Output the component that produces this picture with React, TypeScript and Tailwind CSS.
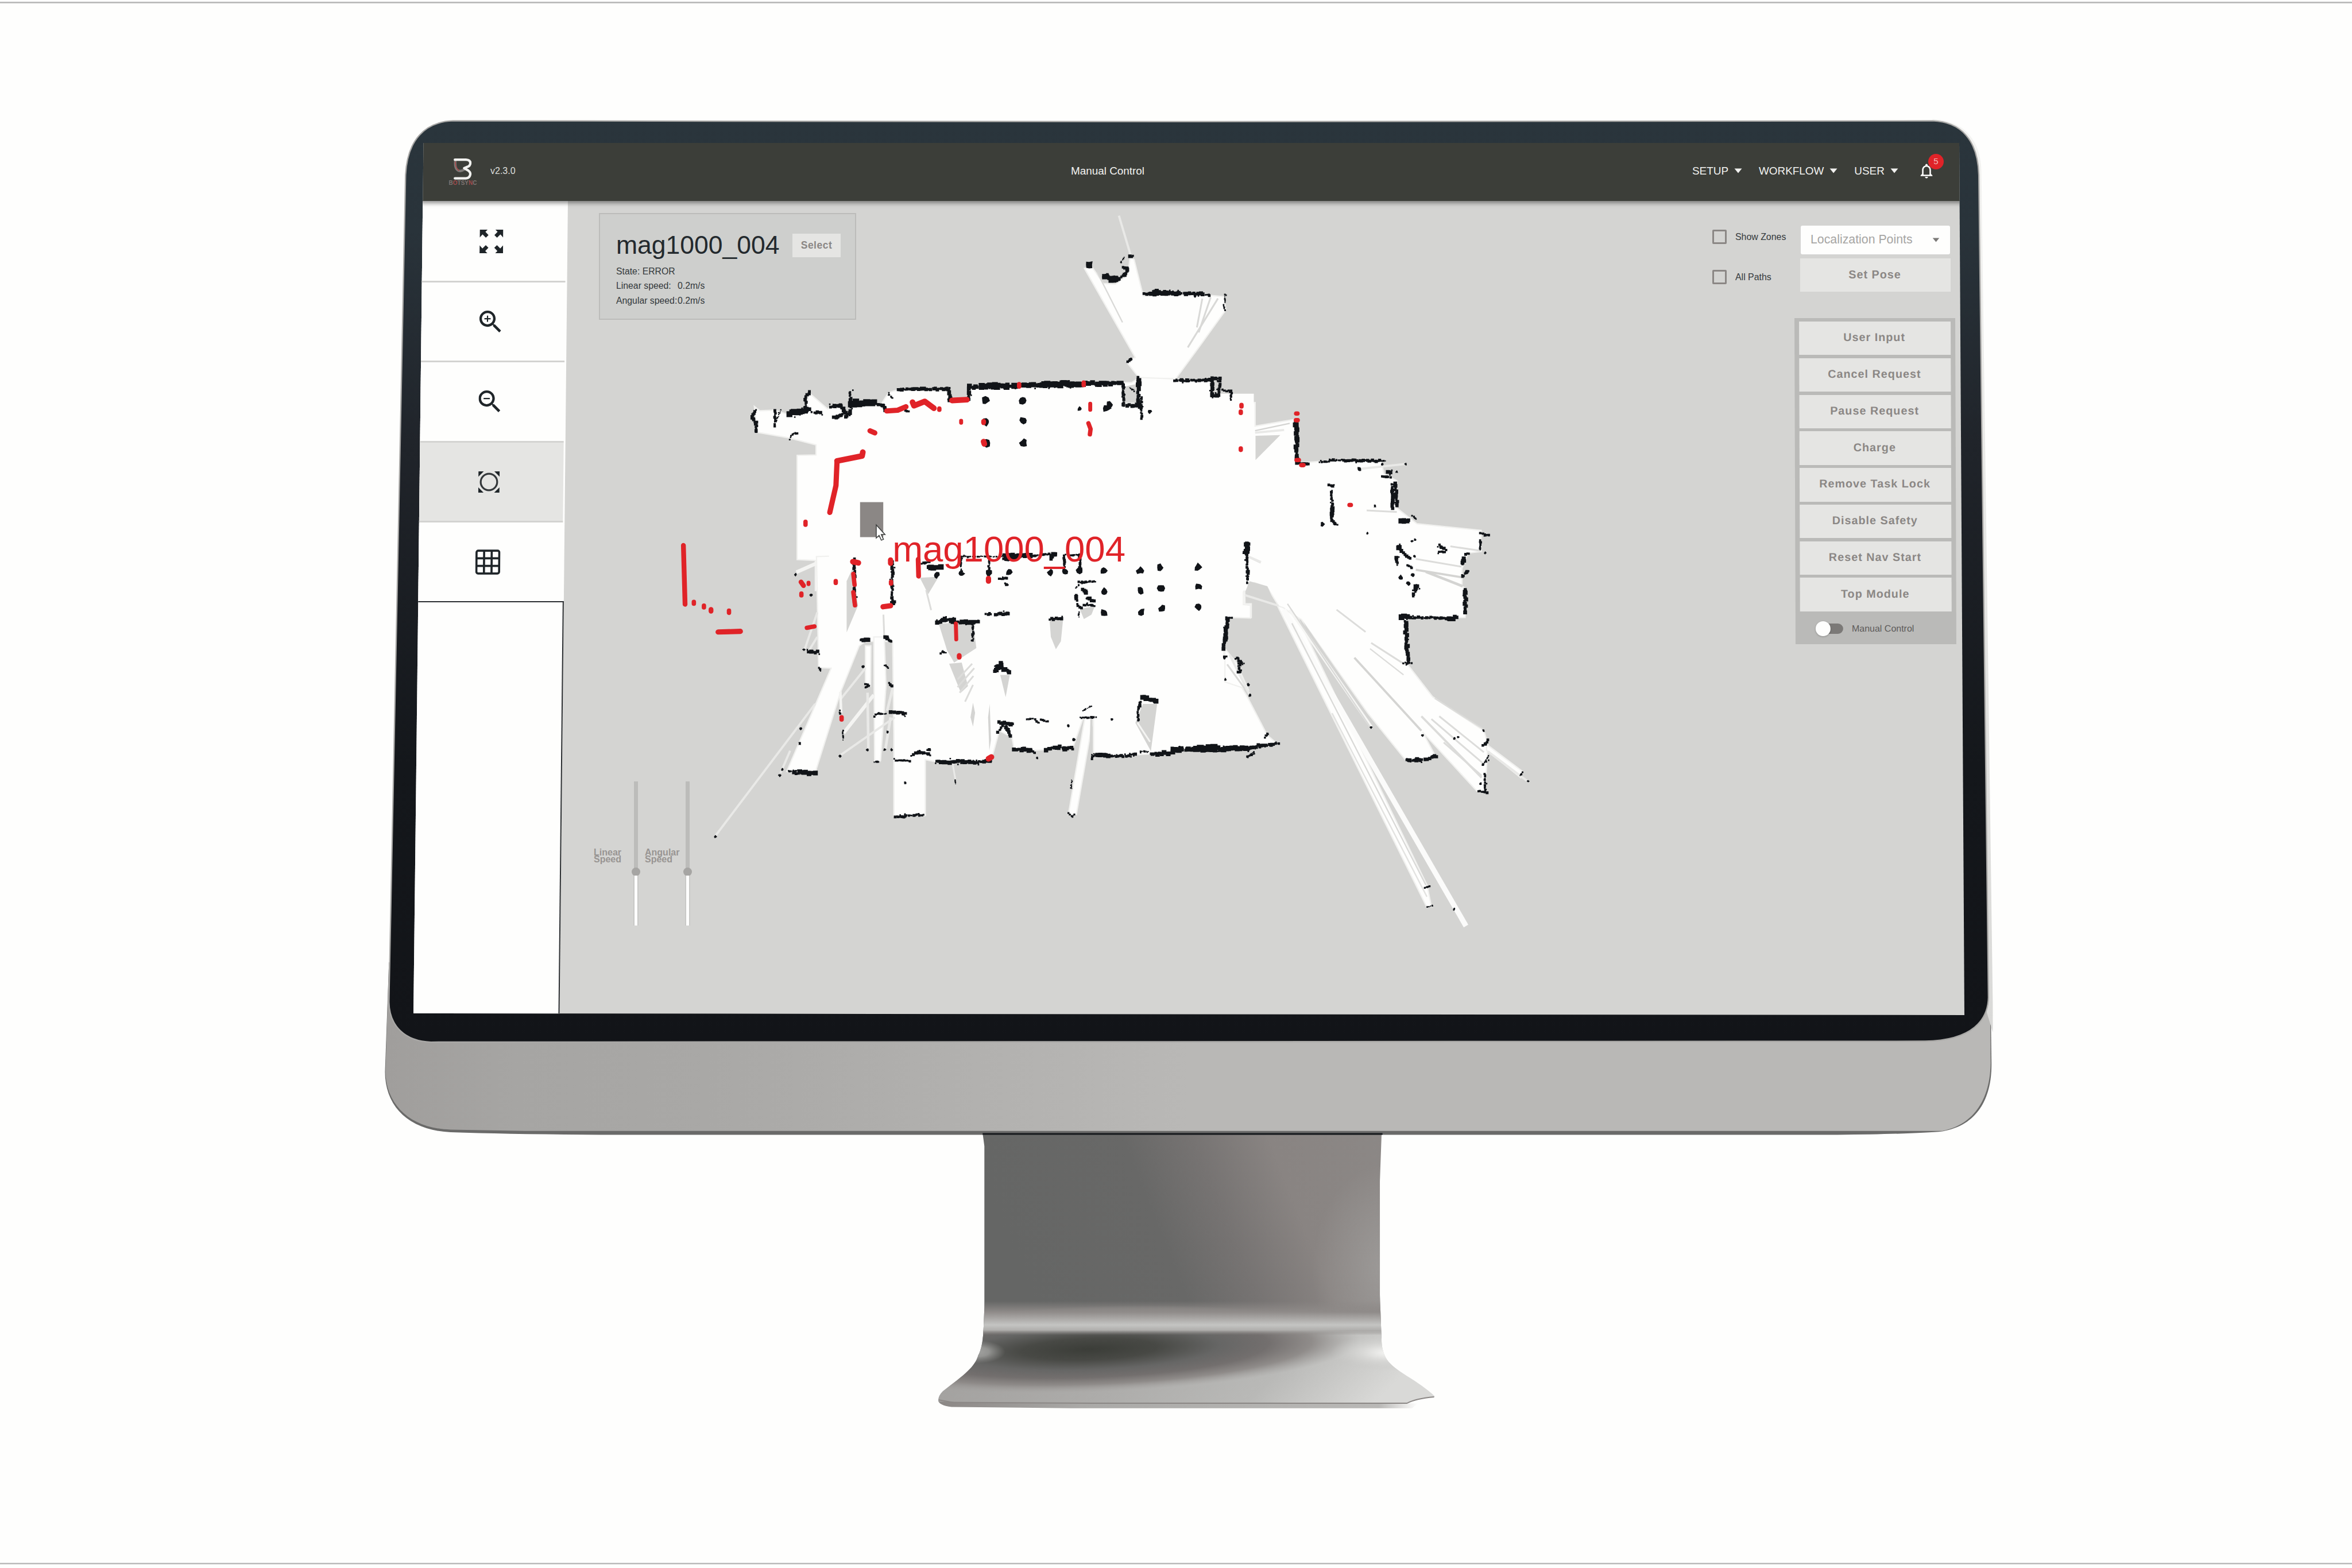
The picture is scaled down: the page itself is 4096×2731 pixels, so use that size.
import { ReactNode } from "react";

/* ---------- map geometry ---------- */

type Tile = { ox: number; oy: number; sx: number; sy: number };
type Stroke = [number, string];

const north: Tile = { ox: 1600, oy: 450, sx: 0.8291, sy: 0.574 };
const east: Tile = { ox: 2800, oy: 800, sx: 0.5102, sy: 0.8929 };
const south: Tile = { ox: 1500, oy: 1150, sx: 0.9566, sy: 0.5102 };

function pts(t: Tile, s: string): [number, number][] {
  return s
    .trim()
    .split(/\s+/)
    .map((p) => {
      const [x, y] = p.split(",").map(Number);
      return [t.ox + x * t.sx, t.oy + y * t.sy];
    });
}

const poly = (t: Tile, s: string) =>
  pts(t, s)
    .map(([x, y]) => `${x.toFixed(1)},${y.toFixed(1)}`)
    .join(" ");

let seed = 7;
function rnd() {
  seed = (seed * 16807) % 2147483647;
  return seed / 2147483647;
}

/* A wall is laid down as overlapping occupancy cells of uneven size. */
function wall(t: Tile, [w, s]: Stroke) {
  const p = pts(t, s);
  let d = "";
  const cell = (x: number, y: number, k: number) => {
    d += `M${(x - k / 2).toFixed(1)} ${(y - k / 2).toFixed(1)}h${k.toFixed(1)}v${k.toFixed(1)}h${(-k).toFixed(1)}z`;
  };
  for (let i = 0; i < p.length - 1; i++) {
    const [x1, y1] = p[i];
    const [x2, y2] = p[i + 1];
    const n = Math.max(1, Math.ceil(Math.hypot(x2 - x1, y2 - y1) / 4));
    for (let j = 0; j <= n; j++) {
      const f = j / n;
      const x = x1 + (x2 - x1) * f;
      const y = y1 + (y2 - y1) * f;
      const k = w * (0.55 + rnd() * 0.55);
      const o = w * 0.45;
      cell(x + (rnd() - 0.5) * o, y + (rnd() - 0.5) * o, k);
      if (rnd() > 0.82) cell(x + (rnd() - 0.5) * w * 1.5, y + (rnd() - 0.5) * w * 1.5, 3.5);
    }
  }
  return d;
}

function blob(t: Tile, s: string, r: number) {
  return pts(t, s)
    .map(([x, y]) => {
      const n = 8;
      let d = "";
      for (let i = 0; i < n; i++) {
        const a = (i / n) * Math.PI * 2;
        const q = r * (0.6 + rnd() * 0.65);
        d += `${i ? "L" : "M"}${(x + Math.cos(a) * q).toFixed(1)} ${(y + Math.sin(a) * q * 1.05).toFixed(1)}`;
      }
      return d + "z";
    })
    .join("");
}

const freeSpace: [Tile, string][] = [
  [north, "1060,285 1080,278 1112,345 1145,348 1180,310 1186,240 1197,250 1222,395 1390,390 1444,398 1450,450 1380,590 1312,724 1212,724 1175,655 1200,640"],
  [north, "150,835 165,852 205,850 250,870 290,850 302,782 352,845 372,822 410,865 415,825 500,825 520,780 548,768 685,765 685,812 740,812 742,760 1165,740 1190,740 1212,720 1405,730 1412,795 1463,800 1445,822 1530,822 1530,1568 318,1568 318,1448 268,1445 268,1030 320,1028 320,988 245,960 158,938"],
  [east, "0,135 135,135 135,195 310,178 325,290 430,285 700,283 712,318 770,335 770,405 860,445 1148,462 1148,516 1090,520 1062,560 1062,605 1080,612 1076,685 812,687 818,805 930,888 1160,975 1178,1010 1165,1132 1130,1130 885,978 945,1042 812,1052 640,930 342,690 240,655 190,608 105,590 88,600 90,650 118,650 118,685 0,685"],
  [south, "383,240 1412,180 1410,360 1403,400 1403,455 1420,458 1420,515 1365,512 1355,690 1410,860 1460,1040 1482,1076 1415,1098 1240,1104 1180,1124 1045,1140 1045,965 1020,965 995,1100 900,1108 855,1098 850,1050 820,1020 800,1155 665,1158 643,1150 643,1400 568,1405 568,1040 565,620 500,620 485,640 440,850 380,1208 312,1202 418,740 388,738"],
  [south, "1024,965 1044,965 1004,1395 985,1395"],
  [south, "520,600 545,600 549,820 536,1155 522,1160"],
  [south, "500,640 513,640 512,820 500,810"],
  [east, "262,660 330,690 905,1370 925,1425 903,1425 235,655"],
  [east, "1172,1010 1335,1080 1325,1095 1172,1025"],
  [east, "0,765 50,800 105,870 0,850"],
];

const unknown: [Tile, string][] = [
  [south, "470,290 482,460 455,580 455,350"],
  [south, "675,540 757,535 765,650 712,715 695,660"],
  [south, "630,335 675,330 650,408"],
  [south, "940,525 972,525 967,620 955,655 943,600"],
  [south, "822,770 845,770 835,870"],
  [south, "1163,900 1197,900 1182,1112 1145,985"],
  [south, "1012,475 1048,462 1040,500 1022,520"],
  [south, "757,895 762,940 757,1002 751,960"],
  [south, "797,900 800,1060 796,1110 793,960"],
  [south, "700,720 730,715 745,820 728,850"],
  [north, "1160,760 1206,745 1206,820 1172,820"],
  [east, "137,220 248,218 137,282"],
  [east, "110,592 190,605 225,650 92,618"],
  [east, "350,695 640,935 655,965 600,935 430,790"],
];

/* Thin laser rays, light over unknown space or faint over free space. */
const rays: [Tile, number, string, string][] = [
  [north, 5, "#e9e9e7", "1155,75 1190,245"],
  [north, 3, "#d9d9d7", "1095,300 1165,500"],
  [north, 4, "#d9d9d7", "1385,405 1370,520"],
  [north, 4, "#d9d9d7", "1408,400 1375,540"],
  [north, 4, "#d9d9d7", "1428,405 1345,600"],
  [east, 12, "#fbfbfa", "262,665 1080,1475"],
  [east, 3, "#d9d9d7", "300,700 900,1370"],
  [east, 3, "#e2e2e0", "480,930 905,1400"],
  [east, 7, "#f6f6f4", "290,665 655,965"],
  [east, 3, "#d9d9d7", "280,650 650,965"],
  [east, 5, "#e9e9e7", "135,212 265,205"],
  [east, 3, "#d4d4d2", "135,207 290,188"],
  [east, 5, "#e9e9e7", "90,628 240,655"],
  [east, 4, "#dcdcda", "500,665 630,722"],
  [east, 5, "#d4d4d2", "580,788 880,975"],
  [east, 4, "#dcdcda", "655,750 805,805"],
  [east, 3, "#dcdcda", "650,765 800,832"],
  [east, 5, "#dcdcda", "880,938 1150,1095"],
  [east, 4, "#dcdcda", "925,945 1155,1058"],
  [east, 4, "#dcdcda", "960,938 1160,1030"],
  [east, 4, "#dcdcda", "980,1005 1150,1090"],
  [east, 3, "#dcdcda", "940,892 1155,970"],
  [east, 4, "#dcdcda", "855,535 1060,555"],
  [east, 5, "#d4d4d2", "855,563 1060,582"],
  [east, 6, "#d4d4d2", "900,568 1065,605"],
  [east, 4, "#dcdcda", "635,411 770,415"],
  [east, 4, "#dcdcda", "1010,503 1145,514"],
  [east, 5, "#e9e9e7", "600,305 808,292"],
  [east, 5, "#e9e9e7", "1178,1028 1355,1104"],
  [east, 4, "#d9d9d7", "10,805 105,880"],
  [east, 4, "#e2e2e0", "105,530 160,545"],
  [south, 5, "#e9e9e7", "380,900 142,1490"],
  [south, 5, "#e9e9e7", "320,1110 297,1210"],
  [south, 8, "#f4f4f2", "520,860 448,1030"],
  [south, 5, "#e9e9e7", "500,740 440,880"],
  [south, 5, "#e9e9e7", "570,960 440,1130"],
  [south, 6, "#f4f4f2", "440,845 442,940"],
  [south, 6, "#e9e9e7", "505,850 507,1100"],
  [south, 6, "#e9e9e7", "560,960 548,1100"],
  [south, 6, "#e9e9e7", "565,830 552,930"],
  [south, 4, "#e9e9e7", "708,1165 715,1240"],
  [south, 8, "#f4f4f2", "335,310 383,270"],
  [south, 5, "#e9e9e7", "385,490 355,655"],
  [south, 5, "#e9e9e7", "385,600 362,670"],
  [south, 4, "#dcdcda", "755,720 720,790"],
  [south, 4, "#dcdcda", "760,740 720,825"],
  [south, 4, "#dcdcda", "758,775 725,850"],
  [south, 4, "#dcdcda", "757,815 738,890"],
  [south, 4, "#dcdcda", "645,390 657,480"],
  [south, 4, "#dcdcda", "543,500 545,600"],
  [south, 5, "#d4d4d2", "1040,965 1038,1120"],
  [south, 4, "#f4f4f2", "1150,985 1180,1070"],
  [south, 5, "#e9e9e7", "1415,240 1445,265"],
  [south, 5, "#e9e9e7", "1370,680 1418,860"],
];

const northWalls: Stroke[] = [
  [7, "153,850 143,880 155,900 155,935"], [6, "207,850 207,912"], [4, "222,850 215,880"], [13, "250,862 300,848"], [7, "302,778 290,800 292,840"],
  [8, "310,858 332,858"], [8, "360,835 388,830 402,860 370,880"], [8, "415,775 415,860 400,875"], [15, "418,822 482,822"], [8, "482,825 505,828 512,850"],
  [8, "548,767 688,764"], [9, "685,770 690,810"], [9, "740,762 742,805"], [13, "742,758 870,752"], [11, "870,752 1165,741"], [13, "950,748 1058,744"],
  [7, "1165,745 1170,830"], [10, "1165,830 1212,832"], [10, "1208,722 1210,830"], [6, "1217,800 1217,885"], [8, "1308,731 1405,730"],
  [9, "1412,724 1412,790 1430,790"], [7, "1412,724 1433,724 1430,790"], [6, "1440,770 1465,775 1463,810"], [9, "1225,386 1385,385"], [9, "1250,376 1320,386"],
  [6, "1395,390 1405,392"], [4, "1447,390 1447,420"], [4, "1443,435 1447,450"], [14, "1118,322 1145,332"], [6, "1112,318 1125,308"], [8, "1145,335 1172,312 1180,285 1165,280"], [4, "1160,262 1170,240"],
  [8, "1186,240 1192,234"], [5, "248,965 255,945 268,943"], [6, "1180,655 1188,645"], [4, "520,785 530,800"],
  [4, "1185,760 1195,770"], [6, "565,850 575,856"],
];

const eastWalls: Stroke[] = [
  [10, "318,185 325,290"], [8, "325,290 370,293"], [6, "425,288 465,287"], [7, "470,282 690,284"], [4, "690,284 718,285"], [6, "705,323 740,325"], [8, "730,314 742,314"],
  [8, "750,345 752,405"], [9, "765,340 770,400"], [7, "468,347 484,347"], [6, "478,360 480,400"], [10, "480,400 480,430"], [7, "480,438 502,448"],
  [11, "790,438 820,436"], [5, "840,425 856,432"], [6, "1145,468 1180,475"], [5, "1145,488 1145,512"], [7, "960,500 990,512"], [5, "960,517 985,517"],
  [9, "1066,548 1072,535"], [6, "1075,525 1092,522"], [6, "1060,578 1068,580"], [7, "1075,572 1090,568"], [9, "1075,615 1080,670"], [7, "815,684 1000,687"],
  [10, "1000,690 1035,684"], [12, "795,684 820,684"], [9, "808,695 820,800"], [6, "800,801 835,803"], [10, "780,505 790,512"], [7, "790,515 828,534"],
  [9, "770,533 770,545"], [8, "820,553 838,557"], [8, "850,605 862,605 842,632"], [10, "92,497 104,497"], [12, "96,515 98,520"], [6, "98,520 100,560"],
  [7, "103,565 103,588"], [9, "10,690 5,740"], [5, "5,685 32,687"], [5, "48,790 60,790"], [6, "62,803 85,802"], [6, "60,825 70,822"], [9, "0,1021 110,1020"],
  [6, "110,1022 180,1014 240,1008"], [5, "100,1041 132,1035"], [5, "182,988 195,984"], [9, "815,1052 900,1048"], [8, "900,1048 945,1040"], [7, "1158,1012 1180,1000"],
  [5, "1155,1063 1182,1040"], [5, "1165,1085 1165,1130"], [6, "1135,1130 1172,1133"], [4, "895,1377 918,1373"], [4, "907,1427 928,1423"],
  [4, "1322,1090 1332,1082"], [5, "5,785 0,785"],
];

const southWalls: Stroke[] = [
  [7, "473,250 475,460"], [7, "565,260 563,450"], [7, "568,440 566,450"], [6, "635,272 652,265"], [12, "650,291 680,290"], [4, "730,240 830,240"], [11, "830,238 893,236"],
  [6, "830,250 860,252"], [6, "893,236 935,230"], [10, "940,230 955,230"], [8, "943,250 948,235"], [6, "975,235 975,300"], [5, "975,233 1012,232"],
  [7, "1012,235 1012,300"], [5, "795,240 795,320"], [5, "728,240 728,310"], [6, "818,340 838,335"], [6, "835,362 840,368"], [6, "1010,355 1045,352"], [4, "1003,380 1010,365"],
  [9, "1020,390 1028,400"], [8, "1003,410 1005,435"], [7, "1005,455 1015,470"], [8, "1030,425 1045,440"], [6, "1022,455 1048,460"], [4, "1010,490 1010,510"],
  [8, "788,497 800,497"], [8, "812,497 842,496"], [9, "672,537 690,522 710,525"], [10, "705,535 770,535"], [6, "757,545 757,615"], [7, "940,520 968,518"],
  [5, "680,675 684,665 692,672"], [11, "810,750 825,722"], [10, "825,740 845,758"], [9, "488,612 508,610"], [9, "548,600 563,618"], [9, "365,668 385,668"],
  [5, "388,740 393,752"], [11, "1412,180 1410,230"], [5, "1412,240 1413,360"], [9, "1366,515 1363,560"], [7, "1362,560 1358,620"], [9, "1358,620 1356,650"],
  [7, "1357,688 1358,692"], [6, "1388,695 1398,715 1392,730 1396,755"], [12, "1163,870 1195,885"], [7, "1158,890 1152,930"], [5, "1150,935 1152,975"],
  [6, "1015,962 1050,962"], [4, "1020,930 1040,910"], [5, "885,968 905,968 912,985"], [5, "920,970 935,980"], [9, "820,985 850,990"], [7, "832,990 815,1030"], [8, "835,1000 848,1045"],
  [10, "855,1102 895,1106"], [6, "895,1110 905,1118"], [9, "930,1108 958,1092"], [11, "958,1094 995,1100"], [6, "1040,1145 1050,1125"], [11, "1055,1132 1080,1132"],
  [7, "1080,1136 1125,1133 1145,1124"], [4, "1158,1114 1175,1114"], [10, "1182,1124 1235,1120"], [12, "1235,1104 1415,1099"], [15, "1290,1100 1345,1102"],
  [7, "1420,1095 1440,1085 1480,1080"], [4, "1415,1135 1428,1115"], [4, "1455,1050 1462,1035"], [10, "668,1160 750,1158"], [8, "750,1164 800,1156"], [5, "572,1152 605,1155"],
  [7, "610,1132 625,1115 655,1128"], [6, "648,1105 655,1105"], [5, "315,1200 350,1200"], [10, "330,1210 380,1210"], [5, "522,955 528,945 550,945"], [8, "560,938 595,942"],
  [6, "590,945 595,955"], [6, "570,1406 595,1405"], [6, "595,1399 640,1397"], [4, "985,1390 995,1407 1000,1395"], [5, "522,1160 532,1160"], [4, "446,1020 446,1060"],
  [3, "993,1240 993,1280"], [3, "715,1240 715,1258"], [5, "438,930 440,945"], [6, "500,810 508,820 500,828"], [7, "556,808 563,820"], [4, "548,725 555,740"],
];

const blackCells =
  northWalls.map((w) => wall(north, w)).join("") +
  eastWalls.map((w) => wall(east, w)).join("") +
  southWalls.map((w) => wall(south, w)).join("") +
  blob(north, "1073,271 787,813 890,811 1130,828 790,897 892,890 790,980 893,980 1122,842", 9) +
  blob(north, "1046,845 1240,855 1365,395", 5) +
  blob(south, "1069,303 1157,303 1205,290 1294,288 1070,398 1158,392 1206,382 1296,373 1071,490 1159,488 1209,472 1297,466", 8.5) +
  blob(south, "728,316 795,316 842,310 943,310 977,306 670,323 837,250 1012,300", 8) +
  blob(south, "142,1495 301,1195 295,1220 439,1134 546,1105 505,1106 562,1106 595,1255 343,1078 345,1010 985,998 998,1060 1415,815 1418,862 1360,790 333,321 494,733 353,657 553,1025 1089,970 910,1142 370,412", 3.5) +
  blob(east, "602,305 437,446 788,582 822,598 843,577", 5) +
  blob(east, "655,966 1027,1432 1358,1104 1158,975 885,987 1027,995 1045,991 638,470 672,400 810,292 704,292 770,312 838,490 852,486 850,528 1165,520 105,857 112,885 1145,1110", 3.2);

const redStrokes: [Tile, number, string][] = [
  [north, 13, "378,1052 447,1032 449,1017"], [north, 12, "378,1052 375,1150 358,1257"], [north, 12, "515,853 545,850 568,836"],
  [north, 13, "586,818 590,832 620,815 645,842"], [north, 13, "695,811 736,808"], [north, 9, "1076,824 1076,848"], [north, 10, "1071,902 1077,925 1075,946"],
  [north, 12, "469,932 482,940"], [north, 10, "880,746 880,756"], [north, 10, "1058,740 1058,750"], [north, 10, "660,843 660,848"], [north, 9, "720,892 720,900"],
  [north, 11, "782,894 782,900"], [north, 13, "782,975 784,984"], [north, 10, "1493,829 1493,835"], [north, 10, "1491,855 1491,861"], [north, 10, "1491,1002 1491,1008"],
  [north, 10, "291,1294 291,1306"], [south, 11, "65,190 69,454"], [south, 10, "90,443 90,451"], [south, 10, "114,460 114,468"], [south, 11, "131,477 131,485"],
  [south, 10, "174,482 174,492"], [south, 12, "148,578 201,575"], [south, 13, "470,263 483,268"], [south, 12, "560,255 560,270"], [south, 11, "626,252 627,328"],
  [south, 10, "471,318 474,366"], [south, 10, "471,400 475,458"], [south, 12, "542,465 560,460"], [south, 10, "561,353 561,361"], [south, 11, "346,354 352,370"],
  [south, 9, "364,357 364,363"], [south, 10, "429,350 429,358"], [south, 10, "347,406 347,414"], [south, 10, "360,559 378,553"], [south, 9, "716,540 717,611"],
  [south, 11, "724,683 724,691"], [south, 10, "443,960 443,970"], [south, 13, "794,1146 801,1138"], [south, 12, "794,338 794,350"],
  [east, 10, "319,163 325,163"], [east, 10, "318,180 326,180"], [east, 10, "321,282 331,282"], [east, 10, "342,295 352,295"], [east, 10, "558,397 564,397"],
];

function SiteMap() {
  return (
    <svg className="absolute inset-0 h-[1418px] w-[2434px]" viewBox="1298.200 459.500 3194.600 1861.100" fill="none">
      {freeSpace.map(([t, s], i) => (
        <polygon key={i} points={poly(t, s)} fill="#fefefd" stroke="#f1f1ef" strokeWidth="3" />
      ))}
      {/* covers the outline where the tiles of free space meet */}
      <path d="M1895 1100H2840V1395H1895zM2780 900H2866V1350H2780zM2862 1060L2900 1060V1320H2850z" fill="#fefefd" />
      {unknown.map(([t, s], i) => (
        <polygon key={i} points={poly(t, s)} fill="#d4d4d2" />
      ))}
      {rays.map(([t, w, c, s], i) => (
        <polyline key={i} points={poly(t, s)} stroke={c} strokeWidth={w} />
      ))}
      <path d={blackCells} fill="#111418" />
      <rect x="1966" y="1148" width="53" height="80" fill="#8b8785" />
      {redStrokes.map(([t, w, s], i) => (
        <polyline key={i} points={poly(t, s)} stroke="#e02328" strokeWidth={w} strokeLinecap="round" strokeLinejoin="round" />
      ))}
      <text x="2040" y="1283.500" fontSize="83.300" fill="#e02328" fontFamily="'Liberation Sans', Arial, sans-serif">
        mag1000_004
      </text>
      <path d="M2003 1200v30l6.500-6 5 11 5-2-5-11h8.500z" fill="#fefefd" stroke="#3c3e3d" strokeWidth="2" />
    </svg>
  );
}

/* ---------- monitor ---------- */

function Monitor() {
  return (
    <svg className="absolute inset-0 h-[2731px] w-[4096px]" viewBox="0 0 5376 3584">
      <defs>
        <linearGradient id="bezel" x1="0" y1="0" x2="0" y2="1">
          <stop offset="0" stopColor="#2a353c" />
          <stop offset="0.12" stopColor="#29333a" />
          <stop offset="0.35" stopColor="#20242a" />
          <stop offset="0.7" stopColor="#14171b" />
          <stop offset="1" stopColor="#121418" />
        </linearGradient>
        <linearGradient id="chin" x1="0" y1="0" x2="1" y2="0">
          <stop offset="0" stopColor="#a09e9c" />
          <stop offset="0.08" stopColor="#a6a5a3" />
          <stop offset="0.2" stopColor="#a9a8a6" />
          <stop offset="0.5" stopColor="#b9b8b6" />
          <stop offset="1" stopColor="#b9b8b6" />
        </linearGradient>
        <linearGradient id="edge" x1="0" y1="0" x2="0" y2="1">
          <stop offset="0" stopColor="#f4f4f2" />
          <stop offset="1" stopColor="#d9d9d7" />
        </linearGradient>
        <linearGradient id="column" gradientUnits="userSpaceOnUse" x1="2330" y1="2900" x2="3180" y2="2560">
          <stop offset="0" stopColor="#656665" />
          <stop offset="0.36" stopColor="#686867" />
          <stop offset="0.52" stopColor="#767372" />
          <stop offset="0.7" stopColor="#898482" />
          <stop offset="1" stopColor="#8c8886" />
        </linearGradient>
        <radialGradient id="sheen">
          <stop offset="0" stopColor="#a3a19f" stopOpacity="0.75" />
          <stop offset="1" stopColor="#a3a19f" stopOpacity="0" />
        </radialGradient>
        <linearGradient id="bend" x1="0" y1="0" x2="0" y2="1">
          <stop offset="0" stopColor="#8b8785" stopOpacity="0" />
          <stop offset="0.32" stopColor="#8f8b89" />
          <stop offset="0.5" stopColor="#a8a6a4" />
          <stop offset="0.7" stopColor="#c4c4c2" />
          <stop offset="0.85" stopColor="#b0afad" />
          <stop offset="1" stopColor="#8b8785" stopOpacity="0" />
        </linearGradient>
        <linearGradient id="foot" x1="0" y1="0" x2="1" y2="0.15">
          <stop offset="0" stopColor="#a09e9c" />
          <stop offset="0.45" stopColor="#adacaa" />
          <stop offset="0.75" stopColor="#b9b9b7" />
          <stop offset="1" stopColor="#d9d9d7" />
        </linearGradient>
        <radialGradient id="shade">
          <stop offset="0" stopColor="#3b3d38" />
          <stop offset="0.25" stopColor="#484945" />
          <stop offset="0.48" stopColor="#666665" />
          <stop offset="0.66" stopColor="#736f6e" />
          <stop offset="0.82" stopColor="#8b8785" stopOpacity="0.9" />
          <stop offset="1" stopColor="#a3a19f" stopOpacity="0" />
        </radialGradient>
        <radialGradient id="glow">
          <stop offset="0" stopColor="#f4f4f2" />
          <stop offset="0.4" stopColor="#dadad8" />
          <stop offset="1" stopColor="#c6c6c4" stopOpacity="0" />
        </radialGradient>
        <linearGradient id="lip" x1="0" y1="0" x2="1" y2="0">
          <stop offset="0" stopColor="#8b8785" />
          <stop offset="0.3" stopColor="#aaa9a7" />
          <stop offset="0.92" stopColor="#b9b8b6" />
          <stop offset="1" stopColor="#fefefd" />
        </linearGradient>
        <clipPath id="stand">
          <path d="M2246 2590L2250 2620V2990L2248 3040Q2246 3080 2236 3098C2228 3125 2205 3142 2155 3180Q2143 3192 2145 3204L2480 3206H2950L3216 3207Q3235 3198 3280 3192C3240 3155 3200 3140 3178 3117Q3160 3100 3158 3068L3154 2960V2700L3158 2590z" />
        </clipPath>
      </defs>
      <path d="M0 5.500H5376M0 3574H5376" stroke="#bababa" strokeWidth="3.500" />

      <path d="M2145 3198Q2142 3212 2175 3216L2450 3219H3228L3240 3208z" fill="url(#lip)" />
      <g clipPath="url(#stand)">
        <rect x="2140" y="2590" width="1145" height="470" fill="url(#column)" />
        <ellipse cx="3170" cy="2900" rx="170" ry="240" fill="url(#sheen)" />
        <rect x="2140" y="3042" width="1145" height="168" fill="url(#foot)" />
        <ellipse cx="2490" cy="3084" rx="620" ry="98" fill="url(#shade)" transform="rotate(-2 2490 3084)" />
        <ellipse cx="3170" cy="3092" rx="130" ry="42" fill="url(#glow)" />
        <ellipse cx="2236" cy="3090" rx="62" ry="26" fill="url(#glow)" opacity="0.45" />
        <rect x="2140" y="2974" width="1145" height="78" fill="url(#bend)" />
      </g>
      <path d="M2146 3200L2180 3206 2500 3207.500H3216Q3235 3197 3278 3193" stroke="#8b8785" strokeWidth="2.500" fill="none" />

      <path d="M889 2200L880 2450C880 2530 935 2584 1030 2588Q1200 2594 1500 2594H4200Q4380 2592 4440 2586C4520 2572 4553 2510 4552 2430L4549 2200z" fill="#6a6a69" />
      <path d="M889 2200L881 2450C883 2528 940 2580 1030 2582L1200 2585H4440C4515 2570 4549 2508 4550 2430L4548 2200z" fill="url(#chin)" />
      <path d="M2246 2592H3160" stroke="#16191d" strokeWidth="4" />

      <path d="M4417 272C4490 275 4530 320 4529 400L4555 2300V2360L4540 2310z" fill="url(#edge)" />
      <path
        d="M1036 276L2700 278 4417 276C4482 278 4521 320 4523 400L4545 2280C4544 2330 4510 2378 4400 2380L985 2382C925 2380 890 2345 889 2290L927 400C931 320 971 278 1036 276Z"
        fill="url(#bezel)"
        stroke="#a9a8a6"
        strokeWidth="3"
      />
    </svg>
  );
}

/* ---------- application ---------- */

function Logo() {
  return (
    <div className="flex w-[48px] flex-col items-center">
      <svg className="h-[40px] w-[34px]" viewBox="0 0 44 52" fill="none" strokeLinejoin="round" strokeLinecap="round">
        <path d="M5 8Q3 30 16 31Q24 30 28 25" stroke="#7d7a78" strokeWidth="5.500" />
        <path d="M5 10Q5 24 13 30" stroke="#b8383b" strokeWidth="1.500" />
        <path d="M4 5.500H29Q39 6 39 13Q39 20 31 22L25 24.500L33 29Q39 33 39 38Q38 47 29 47.500H4" stroke="#f2f2f0" strokeWidth="5.500" />
      </svg>
      <span className="text-[10px] leading-[9px] font-bold text-[#7d7371]">
        B<span className="text-[#a04a4b]">O</span>TSY<span className="text-[#a04a4b]">N</span>C
      </span>
    </div>
  );
}

function Caret({ className }: { className: string }) {
  return (
    <svg className={className} viewBox="0 0 14 9">
      <path d="M0.500 0.500H13.500L7 8.500z" fill="currentColor" />
    </svg>
  );
}

function MenuItem({ label }: { label: string }) {
  return (
    <div className="flex items-center gap-[10px]">
      <span>{label}</span>
      <Caret className="h-[9px] w-[14px]" />
    </div>
  );
}

function Header() {
  return (
    <header className="relative z-10 flex h-[101px] items-center bg-[#3c3e39] pb-[3px] pl-[62px] text-[18.900px] text-[#f2f2f0] shadow-[0_4px_7px_rgba(60,60,58,0.55)]">
      <div className="flex w-[1018px] items-center gap-[24px]">
        <Logo />
        <span className="text-[16px] text-[#dededc]">v2.3.0</span>
      </div>
      <h1 className="w-[258px] text-center">Manual Control</h1>
      <nav className="ml-[889px] flex items-center gap-[29px]">
        <MenuItem label="SETUP" />
        <MenuItem label="WORKFLOW" />
        <MenuItem label="USER" />
      </nav>
      <div className="relative ml-[38px]">
        <svg className="h-[28px] w-[22px]" viewBox="3.500 2 17 20.500">
          <path
            d="M12 22c1.100 0 2-.9 2-2h-4c0 1.100.9 2 2 2zm6-6v-5c0-3.070-1.630-5.640-4.500-6.320V4c0-.83-.67-1.500-1.500-1.500s-1.500.67-1.500 1.500v.68C7.640 5.360 6 7.920 6 11v5l-2 2v1h16v-1l-2-2zm-2 1H8v-6c0-2.480 1.510-4.500 4-4.500s4 2.020 4 4.500v6z"
            fill="#fefefd"
          />
        </svg>
        <span className="absolute -top-[16px] left-[14px] flex h-[27px] w-[27px] items-center justify-center rounded-full bg-[#e02328] text-[15px] text-[#f0b9b8]">5</span>
      </div>
    </header>
  );
}

const toolIcons: { name: string; active?: boolean; size: string; icon: ReactNode }[] = [
  {
    name: "Fit",
    size: "size-[41px]",
    icon: (
      <svg viewBox="0 0 24 24" className="size-full" fill="#1f2529">
        <path d="M0 0h8L5.800 2.200 9 5.500 6.300 8.200 2.900 4.900 0 8zM24 0v8l-2.900-3.100-3.400 3.300L15 5.500l3.200-3.300L16 0zM0 24v-8l2.900 3.100 3.400-3.300L9 18.500l-3.200 3.300L8 24zM24 24h-8l2.200-2.200-3.200-3.300 2.700-2.700 3.400 3.300L24 16z" />
      </svg>
    ),
  },
  {
    name: "Zoom in",
    size: "size-[38px]",
    icon: (
      <svg viewBox="3 3 17.500 17.500" className="size-full" fill="#1f2529">
        <path d="M15.500 14h-.79l-.28-.27C15.410 12.590 16 11.110 16 9.500 16 5.910 13.090 3 9.500 3S3 5.910 3 9.500 5.910 16 9.500 16c1.610 0 3.090-.59 4.230-1.570l.27.28v.79l5 4.990L20.490 19l-4.990-5zm-6 0C7.010 14 5 11.990 5 9.500S7.010 5 9.500 5 14 7.010 14 9.500 11.990 14 9.500 14zM12 10h-2v2H9v-2H7V9h2V7h1v2h2v1z" />
      </svg>
    ),
  },
  {
    name: "Zoom out",
    size: "size-[38px]",
    icon: (
      <svg viewBox="3 3 17.500 17.500" className="size-full" fill="#1f2529">
        <path d="M15.500 14h-.79l-.28-.27C15.410 12.590 16 11.110 16 9.500 16 5.910 13.090 3 9.500 3S3 5.910 3 9.500 5.910 16 9.500 16c1.610 0 3.090-.59 4.230-1.570l.27.28v.79l5 4.990L20.490 19l-4.990-5zm-6 0C7.010 14 5 11.990 5 9.500S7.010 5 9.500 5 14 7.010 14 9.500 11.990 14 9.500 14zM7 9h5v1H7z" />
      </svg>
    ),
  },
  {
    name: "Center",
    active: true,
    size: "size-[37px]",
    icon: (
      <svg viewBox="0 0 24 24" className="size-full">
        <circle cx="12" cy="12" r="9.300" fill="none" stroke="#33373a" strokeWidth="2.100" />
        <path d="M0 0h6L0 6zM24 0v6l-6-6zM0 24v-6l6 6zM24 24h-6l6-6z" fill="#1f2529" />
      </svg>
    ),
  },
  {
    name: "Grid",
    size: "size-[44px]",
    icon: (
      <svg viewBox="0 0 24 24" className="size-full" fill="none" stroke="#1f2529" strokeWidth="2">
        <rect x="1.200" y="1.200" width="21.600" height="21.600" rx="1.600" />
        <path d="M8.400 1v22M15.600 1v22M1 8.400h22M1 15.600h22" />
      </svg>
    ),
  },
];

function Sidebar() {
  return (
    <aside className="flex w-[269px] origin-top skew-x-[-0.587deg] flex-col bg-[#fefefd] pt-[2px]">
      {toolIcons.map((t) => (
        <button
          key={t.name}
          aria-label={t.name}
          className={
            "mr-[3px] flex items-center justify-center pl-[6px] " +
            (t.name === "Grid" ? "h-[137px] " : "h-[139.600px] border-b-[3px] border-[#d3d3d1] ") +
            (t.active ? "bg-[#e5e5e3]" : "bg-[#fefefd]")
          }
        >
          <span className={t.size}>{t.icon}</span>
        </button>
      ))}
      <div className="flex-1 border-t-2 border-r-2 border-[#2b2e31]" />
    </aside>
  );
}

function InfoPanel() {
  return (
    <section className="ml-[9px] h-[186px] w-[448px] border-2 border-[#bcbcba] bg-[#cecfcd] pt-[29px] pl-[28px] text-[#33383b]">
      <div className="flex items-center gap-[21px]">
        <h2 className="w-[286px] text-[44.500px] leading-[50px] text-[#23292d]">mag1000_004</h2>
        <button className="h-[41px] w-[84px] bg-[#e5e5e3] text-[17.500px] font-bold tracking-[0.5px] text-[#8b8785]">Select</button>
      </div>
      <dl className="mt-[8px] grid grid-cols-[107px_auto] text-[15.800px] leading-[25.300px]">
        <dt className="col-span-2">State: ERROR</dt>
        <dt>Linear speed:</dt>
        <dd>0.2m/s</dd>
        <dt>Angular speed:</dt>
        <dd>0.2m/s</dd>
      </dl>
    </section>
  );
}

function SpeedSlider() {
  return (
    <div className="flex h-[251px] w-[18px] flex-col items-center">
      <div className="h-[151px] w-[7px] bg-[#bcbcba]" />
      <div className="-my-[1px] h-[15px] w-[15px] shrink-0 rounded-full bg-[#a6a5a3]" />
      <div className="w-[9px] flex-1 border-x-2 border-[#c9c9c7] bg-[#fefefd]" />
    </div>
  );
}

function SpeedSliders() {
  return (
    <section className="mt-[804px] flex text-[16px] leading-[12px] font-bold text-[#989492]">
      <div className="mt-[118px] w-[64px]">
        Linear
        <br />
        Speed
      </div>
      <SpeedSlider />
      <div className="mt-[118px] ml-[7px] w-[65px]">
        Angular
        <br />
        Speed
      </div>
      <SpeedSlider />
    </section>
  );
}

function Check({ label }: { label: string }) {
  return (
    <label className="flex h-[25px] items-center gap-[15px] text-[15.900px] text-[#33383b]">
      <span className="size-[25px] rounded-[2px] border-[3px] border-[#8b8785]" />
      {label}
    </label>
  );
}

const actions = ["User Input", "Cancel Request", "Pause Request", "Charge", "Remove Task Lock", "Disable Safety", "Reset Nav Start", "Top Module"];

function Controls() {
  return (
    <div className="flex items-start pr-[14px]">
      <div className="mt-[29px] flex w-[143px] flex-col gap-[45px]">
        <Check label="Show Zones" />
        <Check label="All Paths" />
      </div>
      <div className="flex w-[282px] flex-col text-[19.800px] font-bold tracking-[1px] text-[#8b8785]">
        <div className="mt-[22px] ml-[11px] flex h-[50px] w-[260px] items-center justify-between rounded-[3px] bg-[#fefefd] pr-[18px] pl-[17px] text-[21.300px] font-normal tracking-normal text-[#a6a5a3]">
          Localization Points
          <Caret className="h-[8px] w-[13px] text-[#7b7977]" />
        </div>
        <button className="mt-[7px] ml-[10px] h-[58px] w-[262px] bg-[#e5e5e3] pr-[2px] pb-[1px]">Set Pose</button>
        <div className="mt-[46px] flex h-[568px] w-[280px] origin-top skew-x-[0.2deg] flex-col gap-[5.400px] bg-[#babab8] pt-[6px] pr-[8px] pl-[8px]">
          {actions.map((a) => (
            <button key={a} className="h-[58.400px] shrink-0 bg-[#e5e5e3] pr-[2px] pb-[2px]">
              {a}
            </button>
          ))}
          <div className="flex h-[49px] items-center pl-[27px]">
            <div className="relative flex h-[26px] w-[48px] items-center justify-end">
              <span className="h-[18px] w-[38px] rounded-full bg-[#7b7977]" />
              <span className="absolute left-0 size-[26px] rounded-full bg-[#fefefd] shadow-[0_1px_3px_rgba(0,0,0,0.25)]" />
            </div>
            <span className="ml-[15px] text-[16px] font-normal tracking-normal text-[#5d5b5a]">Manual Control</span>
          </div>
        </div>
      </div>
    </div>
  );
}

export default function App() {
  return (
    <div className="relative h-[2731px] w-[4096px] overflow-hidden bg-[#fefefd] pt-[249px] pl-[720px] font-['Liberation_Sans',Arial,sans-serif]">
      <Monitor />
      <main className="relative flex h-[1519px] w-[2701px] flex-col overflow-hidden bg-[#d4d4d2] [clip-path:polygon(17.5px_0,2692px_0,2701px_1519px,0_1516px)]">
        <Header />
        <div className="flex h-[1418px]">
          <Sidebar />
          <div className="relative flex-1">
            <SiteMap />
            <div className="relative flex items-start justify-between pt-[21px] pl-[45px]">
              <div>
                <InfoPanel />
                <SpeedSliders />
              </div>
              <Controls />
            </div>
          </div>
        </div>
      </main>
    </div>
  );
}
